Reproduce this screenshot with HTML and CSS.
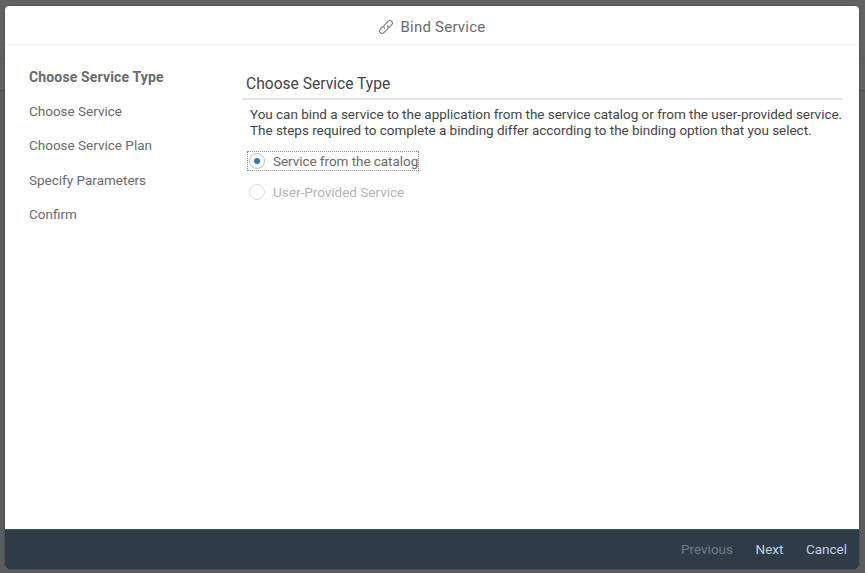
FILE: index.html
```html
<!DOCTYPE html>
<html lang="en">
<head>
<meta charset="utf-8">
<title>Bind Service</title>
<link rel="stylesheet" href="styles.css">
</head>
<body>
<main class="dialog" role="dialog" aria-labelledby="dialog-title">
  <header class="dialog-header">
    <svg class="link-icon" viewBox="0 0 16 16" aria-hidden="true">
      <path d="M6.7 9.3C5.6 8.2 5.7 6.8 6.6 5.9L10.1 2.4C11.2 1.3 12.6 1.3 13.6 2.3S14.7 4.8 13.6 5.9L11.1 8.4"/>
      <path d="M9.3 6.7C10.4 7.8 10.3 9.2 9.4 10.1L5.9 13.6C4.8 14.7 3.4 14.7 2.4 13.7S1.3 11.2 2.4 10.1L4.9 7.6"/>
    </svg>
    <h1 class="dialog-title" id="dialog-title">Bind Service</h1>
  </header>
  <div class="dialog-body">
    <nav class="steps">
      <div class="step step-current">Choose Service Type</div>
      <div class="step">Choose Service</div>
      <div class="step">Choose Service Plan</div>
      <div class="step">Specify Parameters</div>
      <div class="step">Confirm</div>
    </nav>
    <section class="content">
      <h2 class="content-title">Choose Service Type</h2>
      <p class="description">You can bind a service to the application from the service catalog or from the user-provided service.<br>The steps required to complete a binding differ according to the binding option that you select.</p>
      <div class="option option-selected"><i class="radio"></i><span>Service from the catalog</span></div>
      <div class="option option-disabled"><i class="radio"></i><span>User-Provided Service</span></div>
    </section>
  </div>
  <footer class="dialog-footer">
    <button class="action" disabled>Previous</button>
    <button class="action">Next</button>
    <button class="action">Cancel</button>
  </footer>
</main>
</body>
</html>
```
FILE: styles.css
```css
* { box-sizing: border-box; }
body {
  margin: 0;
  height: 573px;
  padding: 6px 6px 4px 5px;
  overflow: hidden;
  background: linear-gradient(#626262 58px, #5a5a5a 58px, #5a5a5a 59px, #606060 59px, #606060 90px, #4c4c4c 90px, #4c4c4c 91px, #5d5d5d 91px);
  font-family: Roboto, "Noto Sans", sans-serif;
  font-size: 13.5px;
  color: #6a6a6a;
}
.dialog {
  display: flex;
  flex-direction: column;
  height: 563px;
  overflow: hidden;
  border-radius: 4px;
  background: #fff;
  box-shadow: 0 0 2px #333;
}
.dialog-header {
  display: flex;
  align-items: center;
  justify-content: center;
  gap: 6px;
  height: 39px;
  padding: 4px 0 0;
  border-bottom: 1px solid #f1f1f1;
}
.link-icon {
  width: 16px;
  height: 16px;
  fill: none;
  stroke: #777;
  stroke-width: 1.1;
  stroke-linecap: round;
}
.dialog-title { margin: 0; font-size: 15px; font-weight: 400; letter-spacing: .23px; }
.dialog-body { display: flex; flex: 1; }
.steps { width: 237px; padding: 15px 0 0 24px; }
.step { height: 34.5px; line-height: 33px; }
.step-current { font-size: 14px; font-weight: 700; letter-spacing: .15px; line-height: 34px; }
.content { width: 601px; padding-top: 24px; }
.content-title {
  height: 31px;
  margin: 0;
  padding-left: 4px;
  border-bottom: 2px solid #e5e5e5;
  color: #444;
  font-size: 15.6px;
  font-weight: 400;
  line-height: 31px;
}
.description {
  margin: 6px 0 13px 8px;
  color: #444;
  letter-spacing: -.03px;
  line-height: 16px;
  white-space: nowrap;
}
.option {
  display: flex;
  align-items: center;
  gap: 8px;
  width: 172px;
  height: 20px;
  margin: 0 0 11px 5px;
  padding-left: 1px;
  border: 1px dotted transparent;
  white-space: nowrap;
}
.option-selected { border-color: #888; letter-spacing: -.05px; }
.radio {
  display: grid;
  flex: none;
  place-items: center;
  width: 16px;
  height: 16px;
  border: 1.5px solid #c2c2c2;
  border-radius: 50%;
}
.option-selected .radio::after {
  content: "";
  width: 6px;
  height: 6px;
  border-radius: 50%;
  background: #3277ad;
}
.option-disabled { color: #b4b4b4; }
.option-disabled .radio { border-color: #dadada; }
.dialog-footer {
  display: flex;
  align-items: center;
  justify-content: flex-end;
  gap: 22.5px;
  height: 40px;
  padding: 0 12px 2px 0;
  border-top: 1px solid #40545f;
  background: #2f3c48;
}
.action {
  padding: 0;
  border: 0;
  background: none;
  color: #bfd2e6;
  font: inherit;
}
.action:disabled { color: #6d7d8b; }
```
